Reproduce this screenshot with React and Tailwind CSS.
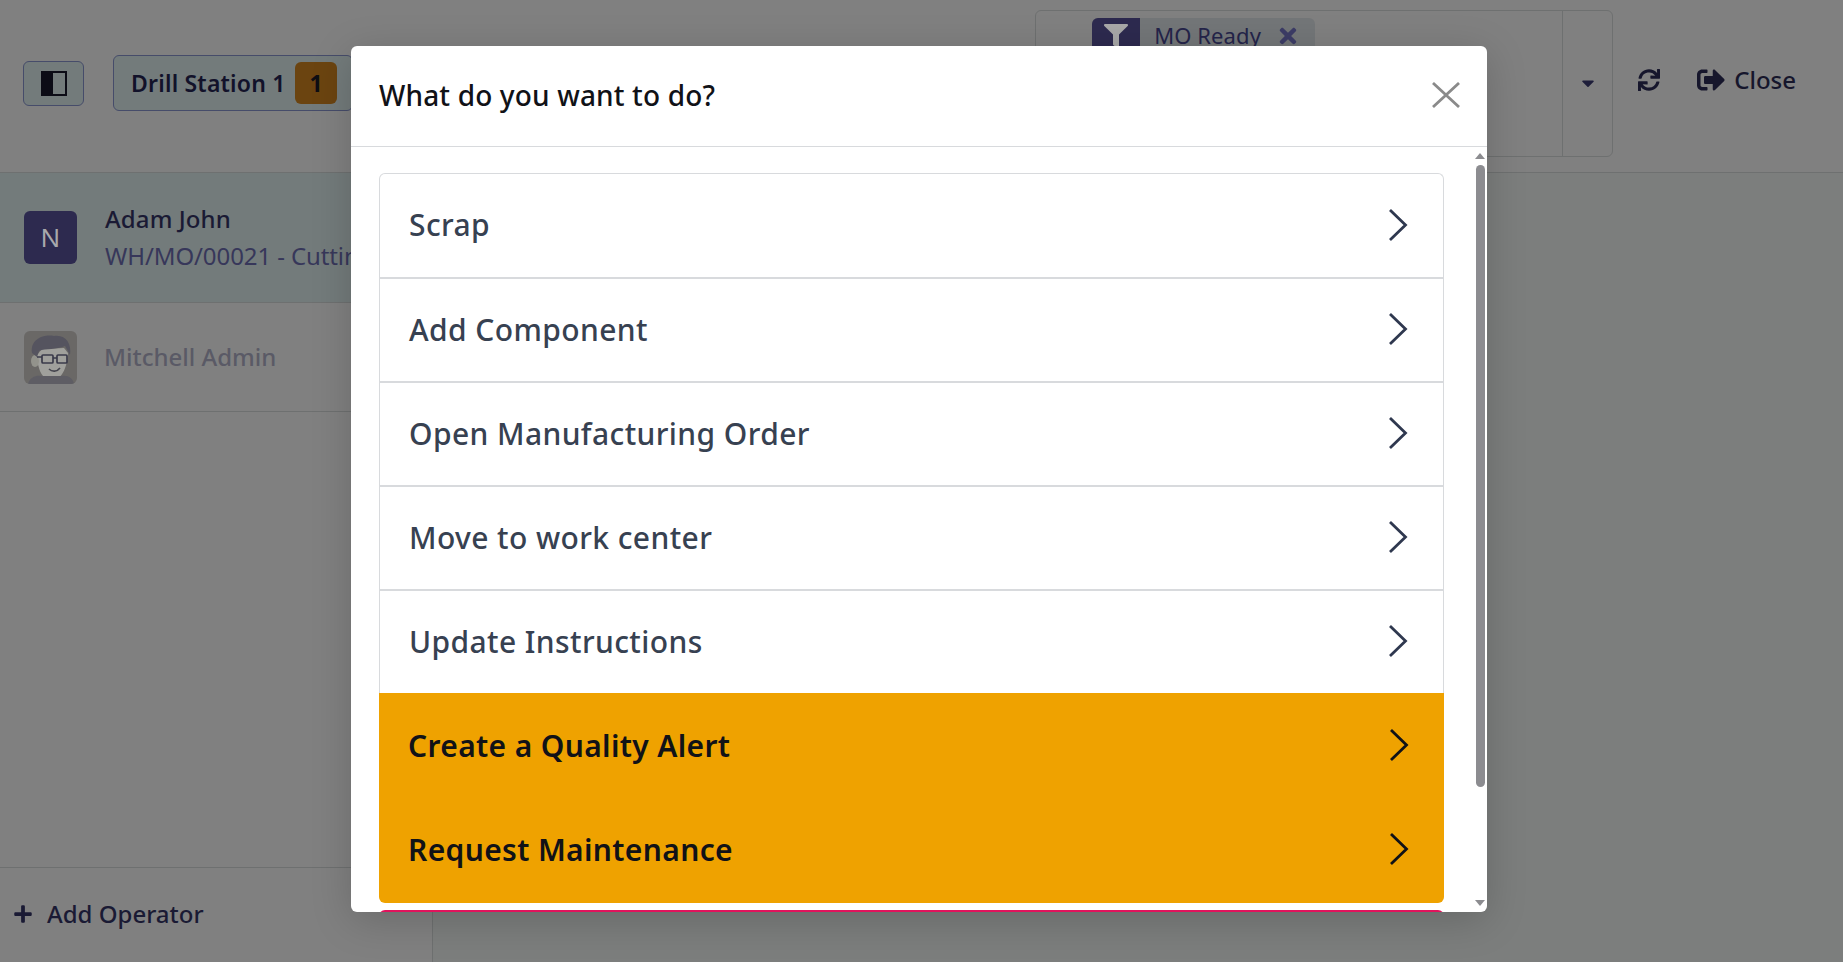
import React from "react";
import { FaCaretDown, FaFilter, FaPlus, FaSignOutAlt, FaSync, FaTimes } from "react-icons/fa";

const font = "font-['Noto_Sans','Open_Sans',sans-serif]";

function Chevron({ dark }) {
  return (
    <svg width="20" height="34" viewBox="0 0 20 34" className={dark ? "text-[#111217]" : "text-[#2f384f]"}>
      <path d="M2 2 L17.5 17 L2 32" fill="none" stroke="currentColor" strokeWidth="2.8" />
    </svg>
  );
}

function Row({ label, kind, tail }) {
  const orange = kind === "orange";
  return (
    <div
      className={
        "flex shrink-0 items-center justify-between pl-[29px] pr-[35px] text-[30px] " +
        (orange
          ? "bg-[#efa200] font-semibold tracking-[0.35px] text-[#111217] " + (tail ? "h-[106px] pb-[2px]" : "h-[104px]")
          : "h-[104px] border-b-2 border-[#d8dadd] pb-[2px] font-medium tracking-[0.4px] text-[#374151] first:h-[105px] last:h-[102px] last:border-b-0")
      }
    >
      <span>{label}</span>
      <Chevron dark={orange} />
    </div>
  );
}

function MitchellAvatar() {
  return (
    <svg width="53" height="53" viewBox="0 0 53 53" className="shrink-0 rounded-md">
      <rect width="53" height="53" fill="#6a6866" />
      <path d="M13 24 C14 44 21 49 28 49 C37 49 43 38 44 22 L40 17 L18 18 Z" fill="#a0a09c" />
      <ellipse cx="11" cy="30" rx="4" ry="6" fill="#93938c" />
      <path d="M8 22 C6 8 20 3 30 5 C41 3 48 12 46 24 L41 15 C32 19 22 17 15 20 L13 26 Z" fill="#55545f" />
      <path d="M4 53 C6 46 12 44 18 45 L38 45 C44 44 49 47 50 53 Z" fill="#5e5d64" />
      <rect x="18" y="24" width="11" height="8" rx="1" fill="none" stroke="#3a3a4a" strokeWidth="1.7" />
      <rect x="33" y="24" width="10" height="8" rx="1" fill="none" stroke="#3a3a4a" strokeWidth="1.7" />
      <path d="M29 27 H33 M13 26 H18" stroke="#3a3a4a" strokeWidth="1.7" />
      <path d="M25 38 C28 41 33 41 36 37" fill="none" stroke="#46464f" strokeWidth="1.6" />
    </svg>
  );
}

export default function App() {
  return (
    <div className={"relative flex h-[962px] w-[1843px] flex-col overflow-hidden bg-[#7c7e7d] " + font}>
      <header className="flex h-[173px] shrink-0 items-center border-b border-[#6e7070] bg-[#808080] pb-[6px] pr-[47px] pl-[23px]">
        <button className="flex h-[45px] w-[61px] items-center justify-center rounded-md border border-[#464c6a] bg-[#737b7b]">
          <svg width="26" height="25" viewBox="0 0 26 25">
            <rect x="1" y="1" width="24" height="23" fill="none" stroke="#0c0c16" strokeWidth="2" />
            <rect x="1" y="1" width="11" height="23" fill="#0c0c16" />
          </svg>
        </button>
        <button className="ml-[29px] flex h-[56px] w-[240px] items-center rounded-md border border-[#464c6a] bg-[#737b7b] pl-[17px] text-[23px] font-semibold text-[#12122a]">
          <span className="w-[164px] whitespace-nowrap text-left tracking-[0.2px]">Drill Station 1</span>
          <span className="flex h-[42px] w-[42px] items-center justify-center rounded-md bg-[#6b4410] font-bold text-[#0e0e14]">1</span>
        </button>
        <div className="flex-1" />
        <div className="flex h-[147px] w-[578px] translate-x-[1px] rounded-md border border-[#6e7070]">
          <div className="flex-1 pl-[56px] pt-[7px]">
            <div className="flex h-[36px] w-[223px] items-center rounded-md bg-[#737678] text-[22px] text-[#24244a]">
              <span className="flex h-[36px] w-[48px] items-center justify-center rounded-l-md bg-[#2d2a4f] text-[#a8a8a8]">
                <FaFilter size={24} />
              </span>
              <span className="ml-[14px] tracking-[0.1px]">MO Ready</span>
              <FaTimes size={24} className="ml-[15px] text-[#3c3c66]" />
            </div>
          </div>
          <div className="flex w-[50px] items-center justify-center border-l border-[#6e7070] text-[#1e1e3a]">
            <FaCaretDown size={20} />
          </div>
        </div>
        <FaSync size={22} className="mb-[6px] ml-[26px] text-[#16162c]" />
        <span className="mb-[6px] ml-[37px] flex items-center text-[#16162c]">
          <FaSignOutAlt size={28} />
          <span className="ml-[9px] text-[24px] font-medium">Close</span>
        </span>
      </header>

      <div className="flex min-h-0 flex-1">
        <aside className="flex w-[433px] shrink-0 flex-col border-r border-[#6e7070] bg-[#808080]">
          <div className="flex h-[130px] shrink-0 items-center gap-[28px] border-b border-[#6e7070] bg-[#737b7b] pl-[24px]">
            <div className="flex h-[53px] w-[53px] shrink-0 items-center justify-center rounded-md bg-[#2d2a4f] text-[26px] text-[#a8a8ac]">N</div>
            <div className="min-w-0 whitespace-nowrap pb-[1px]">
              <div className="text-[24px] font-medium leading-[37px] tracking-[0.1px] text-[#1a1a34]">Adam John</div>
              <div className="text-[24px] leading-[37px] tracking-[-0.1px] text-[#37375a]">WH/MO/00021 - Cutting</div>
            </div>
          </div>
          <div className="flex h-[109px] shrink-0 items-center gap-[27px] border-b border-[#6e7070] pl-[24px]">
            <MitchellAvatar />
            <span className="text-[24px] font-medium tracking-[0px] text-[#5a5a66]">Mitchell Admin</span>
          </div>
          <div className="flex-1" />
          <div className="flex h-[95px] shrink-0 items-center border-t border-[#6e7070] pb-[2px] pl-[13px] text-[#1a1a34]">
            <FaPlus size={20} />
            <span className="ml-[14px] text-[24px] font-medium tracking-[0px]">Add Operator</span>
          </div>
        </aside>
        <main className="flex-1" />
      </div>

      {/* modal */}
      <div className="absolute left-[351px] top-[46px] flex h-[866px] w-[1136px] flex-col overflow-hidden rounded-md bg-white shadow-[0_8px_40px_rgba(0,0,0,0.18)]">
        <div className="flex h-[101px] shrink-0 items-center justify-between border-b border-[#d8dadd] pb-[2px] pl-[28px] pr-[27px] text-[28px] font-medium tracking-[0.15px] text-[#111217]">
          <span>What do you want to do?</span>
          <svg width="28" height="26" viewBox="0 0 28 26">
            <path d="M1 1 L27 25 M27 1 L1 25" stroke="#8a8a8a" strokeWidth="2.8" />
          </svg>
        </div>
        <div className="flex min-h-0 flex-1">
          <div className="flex min-h-0 flex-1 flex-col overflow-hidden pl-[28px] pr-[29px] pt-[26px]">
            <div className="flex shrink-0 flex-col overflow-hidden rounded-t-md border-x border-t border-[#d8dadd]">
              <Row label="Scrap" />
              <Row label="Add Component" />
              <Row label="Open Manufacturing Order" />
              <Row label="Move to work center" />
              <Row label="Update Instructions" />
            </div>
            <div className="flex shrink-0 flex-col overflow-hidden rounded-b-md">
              <Row label="Create a Quality Alert" kind="orange" />
              <Row label="Request Maintenance" kind="orange" tail />
            </div>
            <div className="mt-[7px] h-[40px] shrink-0 rounded-t-md bg-[#e0135c]" />
          </div>
          <div className="flex w-[14px] shrink-0 flex-col items-center pt-[6px] pb-[6px]">
            <div className="h-0 w-0 border-x-[5px] border-b-[6px] border-x-transparent border-b-[#8c8c90]" />
            <div className="mt-[6px] h-[622px] w-[9px] rounded-full bg-[#8c8c90]" />
            <div className="flex-1" />
            <div className="h-0 w-0 border-x-[5px] border-t-[6px] border-x-transparent border-t-[#8c8c90]" />
          </div>
        </div>
      </div>
    </div>
  );
}
